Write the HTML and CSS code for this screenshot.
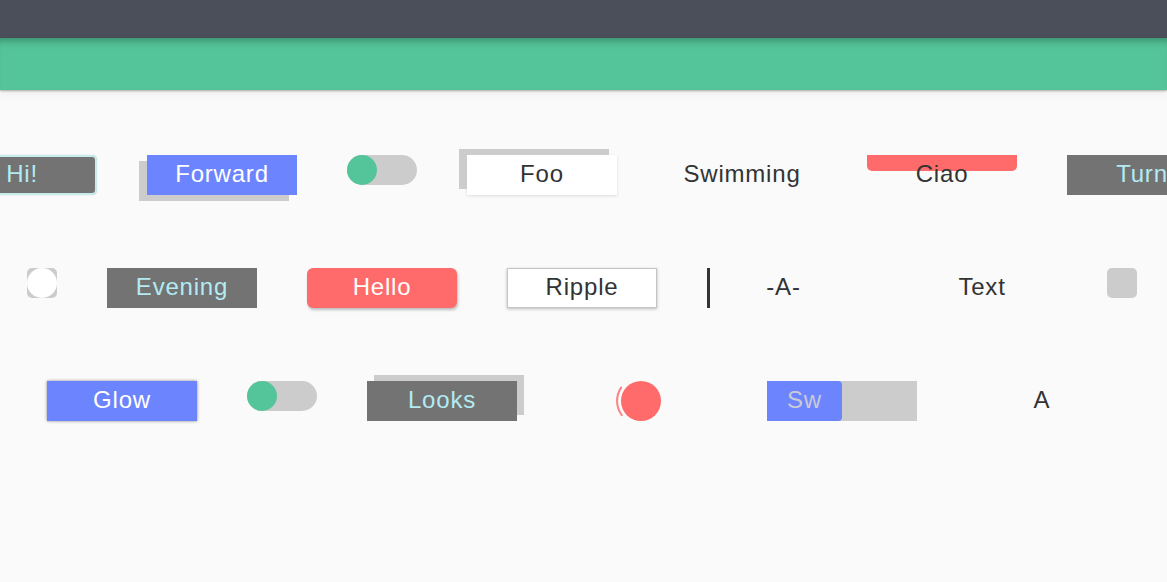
FILE: index.html
```html
<!DOCTYPE html>
<html>
<head>
<meta charset="utf-8">
<link rel="stylesheet" href="styles.css">
</head>
<body>
<div class="topbar"></div>
<div class="navbar"></div>
<main class="stage">
  <div class="row row-1">
    <div class="cell btn btn-gray btn-bordered">Hi!</div>
    <div class="cell btn btn-blue shadow-left-down">Forward</div>
    <div class="toggle"><span class="knob"></span></div>
    <div class="cell btn btn-white shadow-left-up">Foo</div>
    <div class="cell text-cell">Swimming</div>
    <div class="cell text-cell ciao"><span class="ciao-bar"></span><span class="ciao-text">Ciao</span></div>
    <div class="cell btn btn-gray">Turn</div>
  </div>
  <div class="row row-2">
    <div class="checkbox"><span class="dot"></span></div>
    <div class="cell btn btn-gray">Evening</div>
    <div class="cell btn btn-red">Hello</div>
    <div class="cell btn btn-ripple">Ripple</div>
    <div class="cell text-cell cursor-cell">-A-</div>
    <div class="cell text-cell">Text</div>
    <div class="square"></div>
  </div>
  <div class="row row-3">
    <div class="cell btn btn-blue glow">Glow</div>
    <div class="toggle"><span class="knob"></span></div>
    <div class="cell btn btn-gray shadow-right-up">Looks</div>
    <div class="cell pulse-cell">
      <svg class="pulse" width="56" height="56" viewBox="0 0 56 56">
        <path d="M 8.1 14.6 A 24 24 0 0 0 8.8 42.2" fill="none" stroke="#ff6b6b" stroke-width="2" stroke-linecap="round" opacity="0.85"/>
        <circle cx="28" cy="28" r="20" fill="#ff6b6b"/>
      </svg>
    </div>
    <div class="cell switch-sw"><span class="sw-fill">Sw</span></div>
    <div class="cell text-cell">A</div>
  </div>
</main>
</body>
</html>
```

FILE: styles.css
```css
html, body {
  margin: 0;
  padding: 0;
  overflow: hidden;
  background: #fafafa;
  font-family: "Liberation Sans", Arial, sans-serif;
  color: #333;
}

.topbar {
  height: 38px;
  background: #4b4f59;
}

.navbar {
  height: 52px;
  background: #54c59a;
  box-shadow: inset 0 9px 8px -7px rgba(0, 0, 0, 0.35), 0 1px 2px rgba(0, 0, 0, 0.3), 0 4px 10px rgba(0, 0, 0, 0.06);
}

.stage {
  padding-top: 65px;
}

.row {
  display: flex;
  gap: 50px;
  align-items: flex-start;
  height: 40px;
  margin-bottom: 73px;
  white-space: nowrap;
}

.row-1 { margin-left: -53px; }
.row-2 { margin-left: 27px; }
.row-3 { margin-left: 47px; }

.cell {
  flex: 0 0 150px;
  width: 150px;
  height: 40px;
  box-sizing: border-box;
  font-size: 24px;
  line-height: 38px;
  letter-spacing: 0.8px;
  text-align: center;
  position: relative;
}

.btn-gray {
  background: #737373;
  color: #b2ebf2;
}

.btn-bordered {
  border: 2px solid #c6ecec;
  border-radius: 5px;
  line-height: 34px;
  box-shadow: 0 0 1px rgba(0, 0, 0, 0.3);
}

.btn-blue {
  background: #6d84ff;
  color: #fff;
}

.btn-white {
  background: #fff;
  color: #333;
}

.btn-red {
  background: #ff6b6b;
  color: #fff;
  border-radius: 6px;
  box-shadow: 1px 2px 3px rgba(0, 0, 0, 0.25);
}

.btn-ripple {
  background: #fff;
  color: #333;
  border: 1px solid #c4c4c4;
  line-height: 36px;
  box-shadow: 0 1px 3px rgba(0, 0, 0, 0.25);
}

.shadow-left-down { box-shadow: -8px 6px 0 #cccccc; }
.shadow-left-up { box-shadow: -8px -6px 0 #cccccc, 0 1px 3px rgba(0, 0, 0, 0.12); }
.shadow-right-up { box-shadow: 7px -6px 0 #cccccc; }
.glow { box-shadow: 0 0 3px rgba(0, 0, 0, 0.45); }

.toggle {
  flex: 0 0 70px;
  width: 70px;
  height: 30px;
  border-radius: 15px;
  background: #cccccc;
  position: relative;
}

.knob {
  display: block;
  width: 30px;
  height: 30px;
  border-radius: 50%;
  background: #54c59a;
}

.text-cell {
  color: #333;
}

.ciao-bar {
  position: absolute;
  left: 0;
  top: 0;
  width: 150px;
  height: 16px;
  background: #ff6b6b;
  border-radius: 0 0 5px 5px;
}

.ciao-text {
  position: relative;
}

.cursor-cell {
  border-left: 3px solid #333;
}

.checkbox {
  flex: 0 0 30px;
  width: 30px;
  height: 30px;
  background: #cccccc;
  border-radius: 5px;
}

.dot {
  display: block;
  width: 30px;
  height: 30px;
  border-radius: 50%;
  background: #ffffff;
}

.square {
  flex: 0 0 30px;
  width: 30px;
  height: 30px;
  background: #cccccc;
  border-radius: 5px;
}

.pulse-cell {
  display: flex;
  align-items: center;
  justify-content: center;
}

.pulse {
  display: block;
  margin-left: -3px;
}

.switch-sw {
  background: #cccccc;
  text-align: left;
}

.sw-fill {
  display: block;
  width: 75px;
  height: 40px;
  background: #6d84ff;
  border-radius: 0 4px 4px 0;
  color: #c9cad6;
  text-align: center;
}
```
